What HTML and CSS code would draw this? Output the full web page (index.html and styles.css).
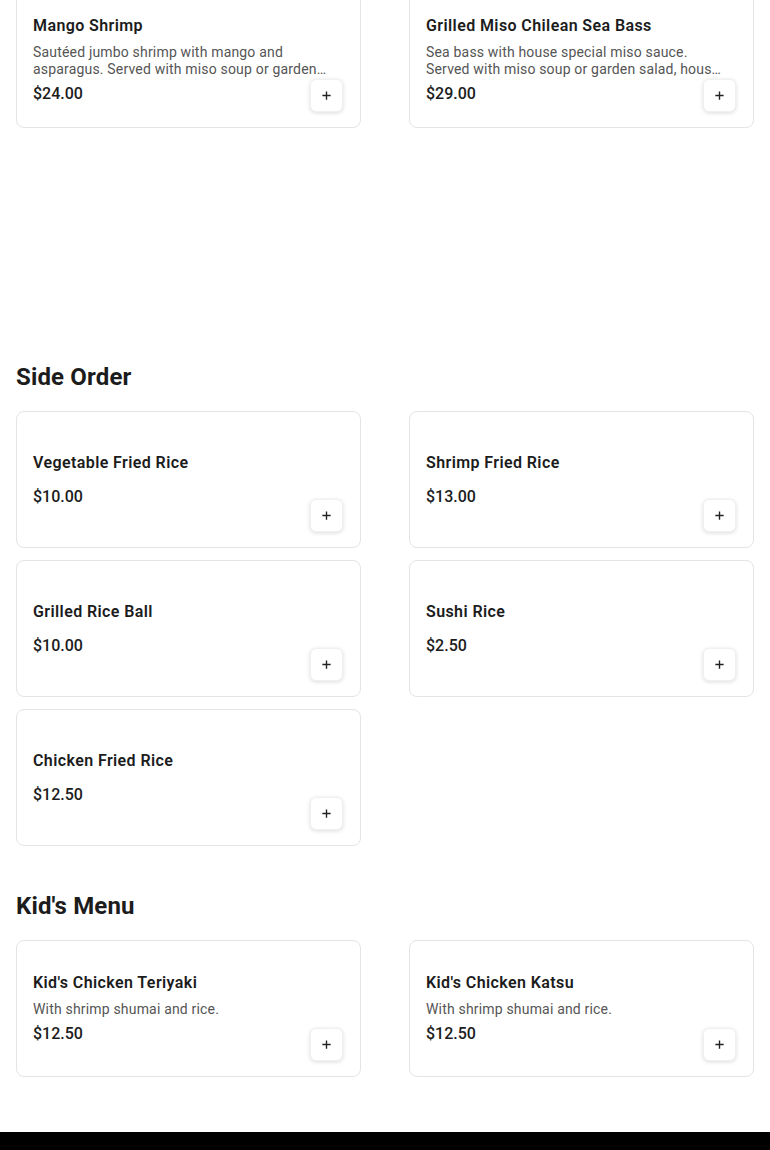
FILE: index.html
```html
<!DOCTYPE html>
<html lang="en">
<head>
<meta charset="utf-8">
<title>Menu</title>
<link rel="stylesheet" href="styles.css">
</head>
<body>
<main class="menu">
  <section class="section section--first">
    <div class="grid">
      <article class="card">
        <div class="card__body">
          <h3 class="card__title">Mango Shrimp</h3>
          <p class="card__desc">Sautéed jumbo shrimp with mango and asparagus. Served with miso soup or garden salad, house rice.</p>
          <div class="card__price">$24.00</div>
        </div>
        <button class="add" aria-label="Add"><svg viewBox="0 0 12 12" width="12" height="12"><path d="M6 1.5v9M1.5 6h9" stroke="currentColor" stroke-width="1.5" fill="none"/></svg></button>
      </article>
      <article class="card">
        <div class="card__body">
          <h3 class="card__title">Grilled Miso Chilean Sea Bass</h3>
          <p class="card__desc">Sea bass with house special miso sauce. Served with miso soup or garden salad, house rice.</p>
          <div class="card__price">$29.00</div>
        </div>
        <button class="add" aria-label="Add"><svg viewBox="0 0 12 12" width="12" height="12"><path d="M6 1.5v9M1.5 6h9" stroke="currentColor" stroke-width="1.5" fill="none"/></svg></button>
      </article>
    </div>
  </section>

  <section class="section">
    <h2 class="section__title">Side Order</h2>
    <div class="grid">
      <article class="card">
        <div class="card__body">
          <h3 class="card__title">Vegetable Fried Rice</h3>
          <p class="card__desc"></p>
          <div class="card__price">$10.00</div>
        </div>
        <button class="add" aria-label="Add"><svg viewBox="0 0 12 12" width="12" height="12"><path d="M6 1.5v9M1.5 6h9" stroke="currentColor" stroke-width="1.5" fill="none"/></svg></button>
      </article>
      <article class="card">
        <div class="card__body">
          <h3 class="card__title">Shrimp Fried Rice</h3>
          <p class="card__desc"></p>
          <div class="card__price">$13.00</div>
        </div>
        <button class="add" aria-label="Add"><svg viewBox="0 0 12 12" width="12" height="12"><path d="M6 1.5v9M1.5 6h9" stroke="currentColor" stroke-width="1.5" fill="none"/></svg></button>
      </article>
      <article class="card">
        <div class="card__body">
          <h3 class="card__title">Grilled Rice Ball</h3>
          <p class="card__desc"></p>
          <div class="card__price">$10.00</div>
        </div>
        <button class="add" aria-label="Add"><svg viewBox="0 0 12 12" width="12" height="12"><path d="M6 1.5v9M1.5 6h9" stroke="currentColor" stroke-width="1.5" fill="none"/></svg></button>
      </article>
      <article class="card">
        <div class="card__body">
          <h3 class="card__title">Sushi Rice</h3>
          <p class="card__desc"></p>
          <div class="card__price">$2.50</div>
        </div>
        <button class="add" aria-label="Add"><svg viewBox="0 0 12 12" width="12" height="12"><path d="M6 1.5v9M1.5 6h9" stroke="currentColor" stroke-width="1.5" fill="none"/></svg></button>
      </article>
      <article class="card">
        <div class="card__body">
          <h3 class="card__title">Chicken Fried Rice</h3>
          <p class="card__desc"></p>
          <div class="card__price">$12.50</div>
        </div>
        <button class="add" aria-label="Add"><svg viewBox="0 0 12 12" width="12" height="12"><path d="M6 1.5v9M1.5 6h9" stroke="currentColor" stroke-width="1.5" fill="none"/></svg></button>
      </article>
    </div>
  </section>

  <section class="section">
    <h2 class="section__title">Kid's Menu</h2>
    <div class="grid">
      <article class="card">
        <div class="card__body">
          <h3 class="card__title">Kid's Chicken Teriyaki</h3>
          <p class="card__desc">With shrimp shumai and rice.</p>
          <div class="card__price">$12.50</div>
        </div>
        <button class="add" aria-label="Add"><svg viewBox="0 0 12 12" width="12" height="12"><path d="M6 1.5v9M1.5 6h9" stroke="currentColor" stroke-width="1.5" fill="none"/></svg></button>
      </article>
      <article class="card">
        <div class="card__body">
          <h3 class="card__title">Kid's Chicken Katsu</h3>
          <p class="card__desc">With shrimp shumai and rice.</p>
          <div class="card__price">$12.50</div>
        </div>
        <button class="add" aria-label="Add"><svg viewBox="0 0 12 12" width="12" height="12"><path d="M6 1.5v9M1.5 6h9" stroke="currentColor" stroke-width="1.5" fill="none"/></svg></button>
      </article>
    </div>
  </section>
</main>
<footer class="footer"></footer>
</body>
</html>
```

FILE: styles.css
```css
* { box-sizing: border-box; }

html, body {
  margin: 0;
  padding: 0;
  background: #fff;
}

body {
  font-family: Roboto, "Liberation Sans", Arial, sans-serif;
  color: #1c1c1c;
}

.menu {
  padding: 0 16px;
  margin-top: -9px;
}

.section {
  padding-bottom: 44px;
}

.section--first {
  padding-bottom: 233px;
}

.section__title {
  margin: 0 0 18px;
  font-size: 24px;
  line-height: 32px;
  font-weight: 700;
  letter-spacing: 0.15px;
  color: #1c1c1c;
}

.grid {
  display: grid;
  grid-template-columns: 1fr 1fr;
  column-gap: 48px;
  row-gap: 12px;
}

.card {
  display: grid;
  grid-template-columns: 1fr;
  grid-template-rows: 1fr;
  min-height: 137px;
  padding: 16px;
  border: 1px solid #e4e4e4;
  border-radius: 8px;
  background: #fff;
}

.card__body {
  grid-area: 1 / 1;
  align-self: center;
  display: flex;
  flex-direction: column;
  padding-right: 12px;
}

.card__title {
  margin: 0 0 6px;
  font-size: 16px;
  line-height: 24px;
  font-weight: 600;
  color: #1c1c1c;
  letter-spacing: 0.4px;
}

.card__desc {
  margin: 0 0 4px;
  font-size: 14px;
  line-height: 17px;
  color: #555;
  letter-spacing: 0.18px;
  display: -webkit-box;
  -webkit-line-clamp: 2;
  -webkit-box-orient: vertical;
  overflow: hidden;
}

.card__price {
  font-size: 16px;
  line-height: 24px;
  font-weight: 500;
  color: #1c1c1c;
}

.add {
  grid-area: 1 / 1;
  justify-self: end;
  align-self: end;
  width: 33px;
  height: 33px;
  padding: 0;
  margin: 0 1px -1px 0;
  display: flex;
  align-items: center;
  justify-content: center;
  border: 1px solid #f0f0f0;
  border-radius: 6px;
  background: #fff;
  color: #222;
  box-shadow: 0 1px 4px rgba(0, 0, 0, 0.14);
  cursor: pointer;
}

.add svg {
  display: block;
  width: 11px;
  height: 11px;
}

.footer {
  height: 60px;
  margin-top: 11px;
  background: #000;
}
```
